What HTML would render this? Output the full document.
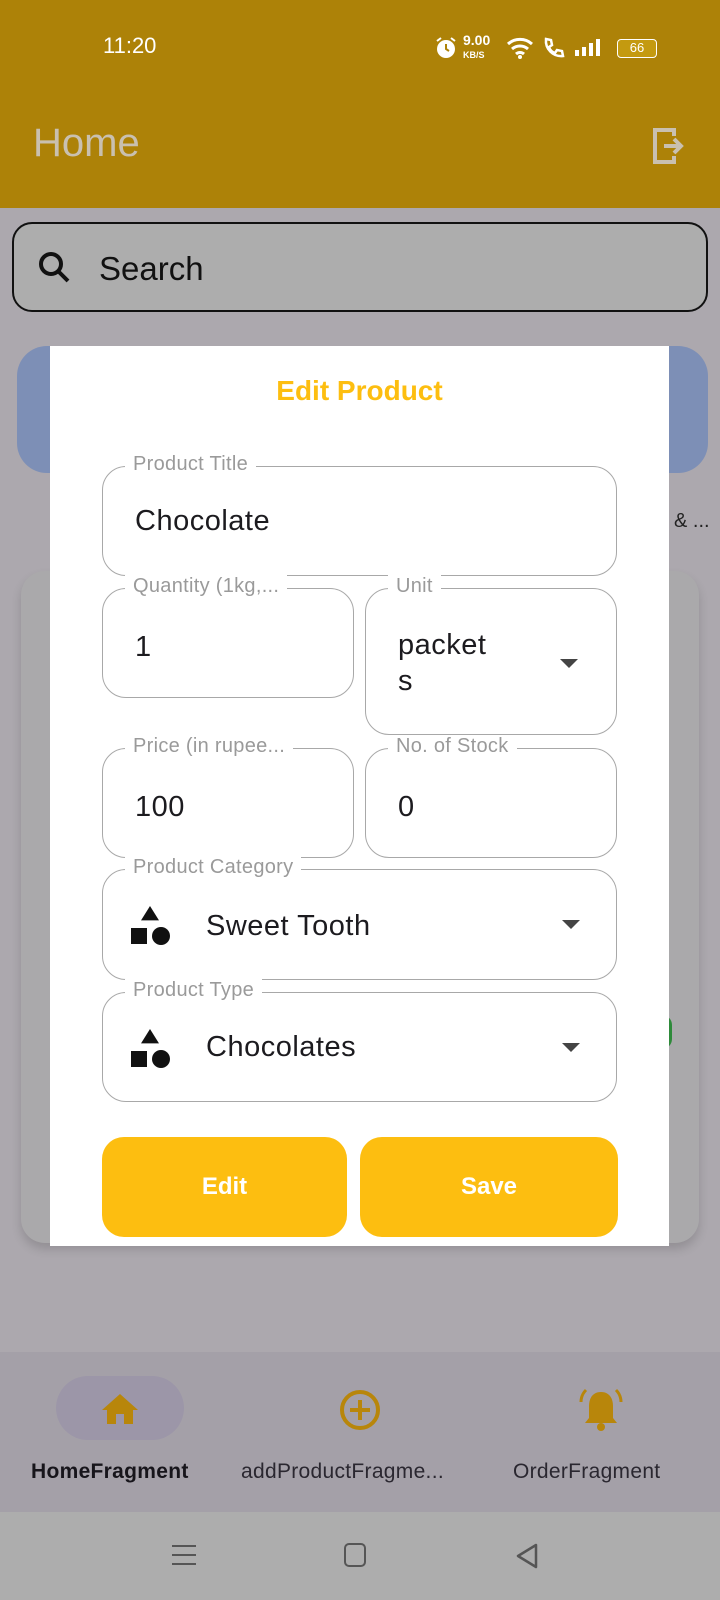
<!DOCTYPE html>
<html><head><meta charset="utf-8"><style>
*{margin:0;padding:0;box-sizing:border-box}
body{width:720px;height:1600px;position:relative;overflow:hidden;background:#aca8ae;font-family:"Liberation Sans",sans-serif}
.a{position:absolute}
.f{position:absolute;border:1.5px solid #a8a8a8;border-radius:24px;background:#fff}
.lb{position:absolute;top:-14px;left:22px;background:#fff;padding:0 8px;font-size:20px;color:#9a9a9a;letter-spacing:.3px;white-space:nowrap}
.tx{position:absolute;font-size:29px;color:#1c1b1f;letter-spacing:.5px}
.dd{position:absolute;right:36px;width:0;height:0;border-left:9px solid transparent;border-right:9px solid transparent;border-top:9px solid #444}
.btn{position:absolute;background:#fdbe10;border-radius:22px;color:#fff;font-weight:bold;font-size:24px;text-align:center}
.nl{position:absolute;top:1460px;font-size:21px;color:#2a2730;letter-spacing:.3px}
</style></head><body>
<div class="a" style="left:0;top:0;width:720px;height:208px;background:#ad8208"></div>
<div class="a" style="left:103px;top:33px;font-size:22px;color:#fff">11:20</div>
<svg class="a" style="left:434px;top:36px" width="24" height="24" viewBox="0 0 24 24"><circle cx="12" cy="13" r="9" fill="#fff"/><path d="M12 8v5l3 2" stroke="#ad8208" stroke-width="2" fill="none"/><path d="M3 5l4-3M21 5l-4-3" stroke="#fff" stroke-width="2"/></svg>
<div class="a" style="left:463px;top:34px;font-size:14px;color:#fff;font-weight:bold;line-height:13px">9.00<br><span style="font-size:9px">KB/S</span></div>
<svg class="a" style="left:506px;top:36px" width="30" height="24" viewBox="0 0 30 24"><path d="M2 8a18 18 0 0 1 24 0M6 13a12 12 0 0 1 16 0M10 18a6 6 0 0 1 8 0" stroke="#fff" stroke-width="3" fill="none"/><circle cx="14" cy="21" r="2" fill="#fff"/></svg>
<svg class="a" style="left:542px;top:36px" width="24" height="24" viewBox="0 0 24 24"><path d="M4 3l5 1 1 5-3 2c1 3 3 5 6 6l2-3 5 1 1 5c-10 1-18-7-17-17z" fill="none" stroke="#fff" stroke-width="2.5"/></svg>
<div class="a" style="left:575px;top:38px;width:28px;height:20px">
<div class="a" style="left:0;top:12px;width:4px;height:6px;background:#fff"></div><div class="a" style="left:7px;top:9px;width:4px;height:9px;background:#fff"></div><div class="a" style="left:14px;top:5px;width:4px;height:13px;background:#fff"></div><div class="a" style="left:21px;top:1px;width:4px;height:17px;background:#fff"></div></div>
<div class="a" style="left:617px;top:39px;width:40px;height:19px;border:1.5px solid #fff;border-radius:4px;font-size:13px;color:#fff;text-align:center;line-height:16px;background:#c49a10">66</div>
<div class="a" style="left:33px;top:121px;font-size:40px;color:#c9c0b0">Home</div>
<svg class="a" style="left:652px;top:126px" width="32" height="40" viewBox="0 0 32 40"><path d="M22 10V4H3v32h19v-6" fill="none" stroke="#c9c0b0" stroke-width="4"/><path d="M12 20h16M22 13l7 7-7 7" fill="none" stroke="#c9c0b0" stroke-width="4"/></svg>
<div class="a" style="left:12px;top:222px;width:696px;height:90px;border:2px solid #111;border-radius:20px;background:#adadad"></div>
<svg class="a" style="left:36px;top:250px" width="38" height="36" viewBox="0 0 38 36"><circle cx="15" cy="14" r="10" fill="none" stroke="#111" stroke-width="4"/><path d="M22 21l10 10" stroke="#111" stroke-width="4"/></svg>
<div class="a" style="left:99px;top:250px;font-size:33px;color:#111">Search</div>
<div class="a" style="left:17px;top:346px;width:691px;height:127px;background:#7d8fb6;border-radius:30px"></div>
<div class="a" style="left:674px;top:510px;font-size:20px;color:#222">&amp; ...</div>
<div class="a" style="left:21px;top:571px;width:678px;height:672px;background:#aaa9ab;border-radius:24px;box-shadow:0 6px 10px rgba(0,0,0,.15)"></div>
<div class="a" style="left:652px;top:1015px;width:20px;height:34px;background:#2e8a3a;border-radius:10px"></div>
<div class="a" style="left:50px;top:346px;width:619px;height:900px;background:#fff"></div>
<div class="a" style="left:50px;top:375px;width:619px;text-align:center;font-size:28px;font-weight:bold;color:#fdbe10">Edit Product</div>
<div class="f" style="left:102px;top:466px;width:515px;height:110px"><div class="lb">Product Title</div><div class="tx" style="left:32px;top:38px">Chocolate</div></div>
<div class="f" style="left:102px;top:588px;width:252px;height:110px"><div class="lb">Quantity (1kg,...</div><div class="tx" style="left:32px;top:42px">1</div></div>
<div class="f" style="left:365px;top:588px;width:252px;height:147px"><div class="lb">Unit</div><div class="tx" style="left:32px;top:38px;line-height:36px">packet<br>s</div><div class="dd" style="top:70px;right:38px"></div></div>
<div class="f" style="left:102px;top:748px;width:252px;height:110px"><div class="lb">Price (in rupee...</div><div class="tx" style="left:32px;top:42px">100</div></div>
<div class="f" style="left:365px;top:748px;width:252px;height:110px"><div class="lb">No. of Stock</div><div class="tx" style="left:32px;top:42px">0</div></div>
<div class="f" style="left:102px;top:869px;width:515px;height:111px"><div class="lb">Product Category</div>
<svg class="a" style="left:28px;top:36px" width="40" height="40" viewBox="0 0 40 40"><path d="M10 0L20 16H0z" fill="#111" transform="translate(10,0) scale(.9)"/><rect x="0" y="22" width="16" height="16" fill="#111"/><circle cx="30" cy="30" r="9" fill="#111"/></svg>
<div class="tx" style="left:103px;top:40px">Sweet Tooth</div><div class="dd" style="top:50px"></div></div>
<div class="f" style="left:102px;top:992px;width:515px;height:110px"><div class="lb">Product Type</div>
<svg class="a" style="left:28px;top:36px" width="40" height="40" viewBox="0 0 40 40"><path d="M10 0L20 16H0z" fill="#111" transform="translate(10,0) scale(.9)"/><rect x="0" y="22" width="16" height="16" fill="#111"/><circle cx="30" cy="30" r="9" fill="#111"/></svg>
<div class="tx" style="left:103px;top:38px">Chocolates</div><div class="dd" style="top:50px"></div></div>
<div class="btn" style="left:102px;top:1137px;width:245px;height:100px;line-height:100px">Edit</div>
<div class="btn" style="left:360px;top:1137px;width:258px;height:100px;line-height:100px">Save</div>
<div class="a" style="left:0;top:1352px;width:720px;height:160px;background:#a4a0a8"></div>
<div class="a" style="left:56px;top:1376px;width:128px;height:64px;background:#9c96a8;border-radius:32px"></div>
<svg class="a" style="left:100px;top:1392px" width="40" height="34" viewBox="0 0 40 34"><path d="M20 2L2 18h5v14h9V22h8v10h9V18h5z" fill="#b8860b"/></svg>
<svg class="a" style="left:338px;top:1388px" width="44" height="44" viewBox="0 0 44 44"><circle cx="22" cy="22" r="18" fill="none" stroke="#b8860b" stroke-width="4"/><path d="M22 12v20M12 22h20" stroke="#b8860b" stroke-width="4"/></svg>
<svg class="a" style="left:578px;top:1386px" width="46" height="50" viewBox="0 0 46 50"><path d="M23 6c-8 0-12 6-12 14v12l-4 5h32l-4-5V20c0-8-4-14-12-14z" fill="#b8860b"/><circle cx="23" cy="41" r="4" fill="#b8860b"/><path d="M8 4C4 8 3 12 3 16M38 4c4 4 5 8 5 12" fill="none" stroke="#b8860b" stroke-width="3"/></svg>
<div class="nl" style="left:31px;font-weight:bold;color:#17151b">HomeFragment</div>
<div class="nl" style="left:241px">addProductFragme...</div>
<div class="nl" style="left:513px">OrderFragment</div>
<div class="a" style="left:0;top:1512px;width:720px;height:88px;background:#adadad"></div>
<div class="a" style="left:172px;top:1545px;width:24px;height:20px;border-top:2px solid #555;border-bottom:2px solid #555"></div>
<div class="a" style="left:172px;top:1554px;width:24px;height:2px;background:#555"></div>
<div class="a" style="left:344px;top:1543px;width:22px;height:24px;border:2.5px solid #555;border-radius:5px"></div>
<svg class="a" style="left:514px;top:1542px" width="26" height="28" viewBox="0 0 26 28"><path d="M22 3L4 14l18 11z" fill="none" stroke="#555" stroke-width="2.5" stroke-linejoin="round"/></svg>
</body></html>
